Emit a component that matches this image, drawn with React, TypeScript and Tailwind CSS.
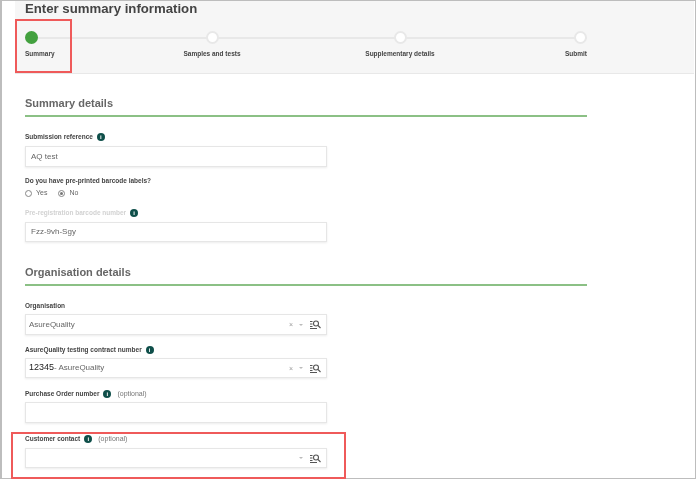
import { ReactNode } from 'react';

const Info = () => (
  <span className="inline-flex h-2 w-2 shrink-0 items-center justify-center rounded-full bg-[#0f4f4a] text-[6px] font-bold leading-none text-white">
    i
  </span>
);

const Label = ({ children, className = '' }: { children: ReactNode; className?: string }) => (
  <div className={`flex h-3 items-center gap-1 text-[6.5px] font-bold ${className || 'text-[#444]'}`}>{children}</div>
);

const SearchList = () => (
  <svg width="11" height="9" viewBox="0 0 11 9" fill="none" stroke="#555" strokeWidth="1.1">
    <path d="M0 1.5h2.5M0 4h2.5M0 6.5h2.5M0 8.500h7" />
    <circle cx="6" cy="3.500" r="2.500" />
    <path d="M8 5.500l2.500 2.500" />
  </svg>
);

const Box = ({ children, className = 'h-[21px]' }: { children?: ReactNode; className?: string }) => (
  <div className={`flex w-[302px] items-center border border-[#e6e6e6] bg-white pr-[5px] pl-[3px] text-[8px] text-[#666] shadow-[0_1px_2px_rgba(0,0,0,0.08)] ${className}`}>
    {children}
  </div>
);

const SelectTail = ({ clear = true }: { clear?: boolean }) => (
  <div className="ml-auto flex items-center">
    {clear && <span className="mr-[6px] text-[7px] leading-none text-[#999]">×</span>}
    <span className="mr-[7px] h-0 w-0 border-x-[2px] border-t-[2px] border-x-transparent border-t-[#bbb]" />
    <SearchList />
  </div>
);

const Section = ({ title }: { title: string }) => (
  <div className="w-[562px] border-b-2 border-[#8bc085] pb-[4px] text-[11px] leading-[16px] font-bold text-[#666]">
    {title}
  </div>
);

const Step = ({ label, active, align, className = '' }: { label: string; active?: boolean; align: 'start' | 'center' | 'end'; className?: string }) => {
  const alignClass = align === 'start' ? 'items-start' : align === 'end' ? 'items-end' : 'items-center';
  return (
    <div className={`relative flex w-[72px] flex-col ${alignClass} ${className}`}>
      <span
        className={`h-[13px] w-[13px] rounded-full ${active ? 'bg-[#43a13f]' : 'border-2 border-[#e8e8e8] bg-white'}`}
      />
      <span className="mt-[5px] whitespace-nowrap text-[6.5px] leading-[9px] font-bold text-[#444]">{label}</span>
    </div>
  );
};

const Radio = ({ label, checked }: { label: string; checked?: boolean }) => (
  <span className="flex items-center gap-[4px] text-[7px] text-[#666]">
    <span className="flex h-[7px] w-[7px] items-center justify-center rounded-full border border-[#888] bg-white">
      {checked && <span className="h-[3px] w-[3px] rounded-full bg-[#777]" />}
    </span>
    {label}
  </span>
);

export default function App() {
  return (
    <div className="relative h-[480px] w-[697px] overflow-hidden bg-white blur-[0.3px] font-['Liberation_Sans',Arial,sans-serif]">
      <div className="h-[479px] w-[696px] border-t border-r border-b border-l-2 border-[#bdbdbd]">
        {/* header */}
        <div className="ml-[13px] h-[73px] w-[679px] border-b border-[#e8e8e8] bg-[#f6f6f6] pl-[10px]">
          <h1 className="text-[13.2px] leading-[16px] font-bold text-[#444]">Enter summary information</h1>
          <div className="relative mt-[14px] flex w-[562px]">
            <div className="absolute top-[6px] right-0 left-0 h-[1.5px] bg-[#e8e8e8]" />
            <Step label="Summary" active align="start" />
            <Step label="Samples and tests" align="center" className="ml-[79px]" />
            <Step label="Supplementary details" align="center" className="ml-[116px]" />
            <Step label="Submit" align="end" className="ml-[79px]" />
          </div>
        </div>

        {/* form */}
        <div className="pt-[21px] pl-[23px]">
          <Section title="Summary details" />
          <div className="mt-[14px]">
            <Label>
              Submission reference <Info />
            </Label>
          </div>
          <div className="mt-[3px]">
            <Box className="h-[21px] text-[#444]">
              <span className="pl-[2px]">AQ test</span>
            </Box>
          </div>
          <div className="mt-[8px]">
            <Label>Do you have pre-printed barcode labels?</Label>
          </div>
          <div className="flex h-[12px] items-center gap-[11px]">
            <Radio label="Yes" />
            <Radio label="No" checked />
          </div>
          <div className="mt-[8px]">
            <Label className="text-[#d2d2d2]">
              Pre-registration barcode number <Info />
            </Label>
          </div>
          <div className="mt-[3px]">
            <Box className="h-[20px]">
              <span className="pl-[2px]">Fzz-9vh-Sgy</span>
            </Box>
          </div>

          <div className="mt-[22px]">
            <Section title="Organisation details" />
          </div>
          <div className="mt-[14px]">
            <Label>Organisation</Label>
          </div>
          <div className="mt-[2px]">
            <Box>
              <span>AsureQuality</span>
              <SelectTail />
            </Box>
          </div>
          <div className="mt-[9px]">
            <Label>
              AsureQuality testing contract number <Info />
            </Label>
          </div>
          <div className="mt-[2px]">
            <Box className="h-[20px]">
              <span className="text-[9px] text-[#222]">12345</span>
              <span>- AsureQuality</span>
              <SelectTail />
            </Box>
          </div>
          <div className="mt-[10px]">
            <Label>
              Purchase Order number <Info />
              <span className="ml-[2px] text-[7px] font-normal text-[#777]">(optional)</span>
            </Label>
          </div>
          <div className="mt-[2px]">
            <Box />
          </div>
          <div className="mt-[10px]">
            <Label>
              Customer contact <Info />
              <span className="ml-[2px] text-[7px] font-normal text-[#777]">(optional)</span>
            </Label>
          </div>
          <div className="mt-[3px]">
            <Box className="h-[20px]">
              <SelectTail clear={false} />
            </Box>
          </div>
        </div>
      </div>

      {/* callouts drawn over the page */}
      <div className="absolute top-[19px] left-[15px] h-[54px] w-[57px] border-2 border-[#ef5a5a]" />
      <div className="absolute top-[432px] left-[11px] h-[47px] w-[335px] border-2 border-[#ef5a5a]" />
    </div>
  );
}
